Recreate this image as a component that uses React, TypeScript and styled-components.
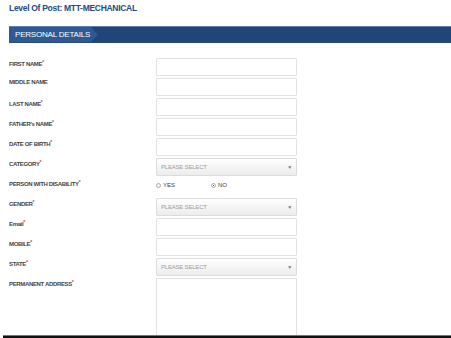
import React from 'react';
import styled, { createGlobalStyle } from 'styled-components';

const GlobalStyle = createGlobalStyle`
    html, body {
        margin: 0;
        padding: 0;
        background: #ffffff;
        overflow: hidden;
        font-family: "Liberation Sans", Arial, sans-serif;
    }
`;

const Page = styled.div`
    display: flex;
    flex-direction: column;
    padding-left: 9px;
    height: 338px;
    overflow: hidden;

    & > * {
        flex-shrink: 0;
    }
`;

const PostTitle = styled.h2`
    margin: 0;
    height: 15px;
    padding-top: 3px;
    box-sizing: border-box;
    font-size: 8.5px;
    line-height: 11px;
    font-weight: bold;
    color: #234a86;
    letter-spacing: -0.3px;
    overflow: hidden;
`;

const SectionBar = styled.div`
    display: flex;
    margin-top: 11px;
    height: 15px;
    background-color: #1f4677;
    border-top: 1px solid #5d7eab;
    border-bottom: 1px solid #2c4a73;
`;

const SectionTab = styled.div`
    display: flex;
    align-items: center;
    width: 83px;
    padding-left: 6px;
    background-color: #2c5a95;
    clip-path: polygon(0 0, 92% 0, 100% 50%, 92% 100%, 0 100%);
    color: #ffffff;
    font-size: 8px;
    letter-spacing: -0.2px;
`;

const Form = styled.div`
    display: grid;
    grid-template-columns: 147px 141px;
    grid-auto-rows: 18px;
    row-gap: 2px;
    margin-top: 15px;
`;

const Label = styled.label`
    font-size: 6px;
    font-weight: bold;
    line-height: 8px;
    color: #444444;
    letter-spacing: -0.35px;
    white-space: nowrap;
`;

const Star = styled.sup`
    color: #d23a3a;
    font-size: 5px;
    vertical-align: 2px;
`;

const TextInput = styled.div`
    box-sizing: border-box;
    border: 1px solid #e2e2e2;
    background: #ffffff;
    border-radius: 1px;
`;

const Select = styled.div`
    box-sizing: border-box;
    display: flex;
    align-items: center;
    justify-content: space-between;
    padding: 0 4px;
    border: 1px solid #dcdcdc;
    border-radius: 1px;
    background: linear-gradient(#ffffff, #ececec);
    color: #9c9c9c;
    font-size: 6px;
    letter-spacing: -0.2px;
`;

const Caret = styled.span`
    font-size: 5px;
    color: #777;
`;

const RadioRow = styled.div`
    display: flex;
    align-items: flex-start;
    gap: 36px;
    padding-top: 4px;
`;

const RadioOption = styled.span`
    display: flex;
    align-items: center;
    gap: 2px;
    font-size: 6px;
    color: #3a3a3a;
`;

const RadioDot = styled.span<{ checked?: boolean }>`
    box-sizing: border-box;
    width: 5px;
    height: 5px;
    border-radius: 50%;
    border: 1px solid #aaa;
    background: ${({ checked }) => (checked ? 'radial-gradient(#444 40%, #fff 45%)' : '#fff')};
`;

const TextArea = styled.div`
    box-sizing: border-box;
    grid-row: span 4;
    height: 80px;
    border: 1px solid #e2e2e2;
    border-bottom: none;
`;

const BottomEdge = styled.div`
    position: fixed;
    left: 3px;
    right: 0;
    bottom: 0;
    height: 2px;
    background: #111;
    border-top: 1px solid #777;
`;

type Field = { label: string; required?: boolean; kind: 'text' | 'select' | 'radio' | 'area' };

const fields: Field[] = [
    { label: 'FIRST NAME', required: true, kind: 'text' },
    { label: 'MIDDLE NAME', kind: 'text' },
    { label: 'LAST NAME', required: true, kind: 'text' },
    { label: "FATHER's NAME", required: true, kind: 'text' },
    { label: 'DATE OF BIRTH', required: true, kind: 'text' },
    { label: 'CATEGORY', required: true, kind: 'select' },
    { label: 'PERSON WITH DISABILITY', required: true, kind: 'radio' },
    { label: 'GENDER', required: true, kind: 'select' },
    { label: 'Email', required: true, kind: 'text' },
    { label: 'MOBILE', required: true, kind: 'text' },
    { label: 'STATE', required: true, kind: 'select' },
    { label: 'PERMANENT ADDRESS', required: true, kind: 'area' },
];

function renderControl(kind: Field['kind']) {
    if (kind === 'select') {
        return (
            <Select>
                PLEASE SELECT
                <Caret>▼</Caret>
            </Select>
        );
    }
    if (kind === 'radio') {
        return (
            <RadioRow>
                <RadioOption><RadioDot />YES</RadioOption>
                <RadioOption><RadioDot checked />NO</RadioOption>
            </RadioRow>
        );
    }
    if (kind === 'area') return <TextArea />;
    return <TextInput />;
}

export default function App() {
    return (
        <Page>
            <GlobalStyle />
            <PostTitle>Level Of Post: MTT-MECHANICAL</PostTitle>
            <SectionBar>
                <SectionTab>PERSONAL DETAILS</SectionTab>
            </SectionBar>
            <Form>
                {fields.map((f) => (
                    <React.Fragment key={f.label}>
                        <Label>
                            {f.label}
                            {f.required && <Star>*</Star>}
                        </Label>
                        {renderControl(f.kind)}
                    </React.Fragment>
                ))}
            </Form>
            <BottomEdge />
        </Page>
    );
}
